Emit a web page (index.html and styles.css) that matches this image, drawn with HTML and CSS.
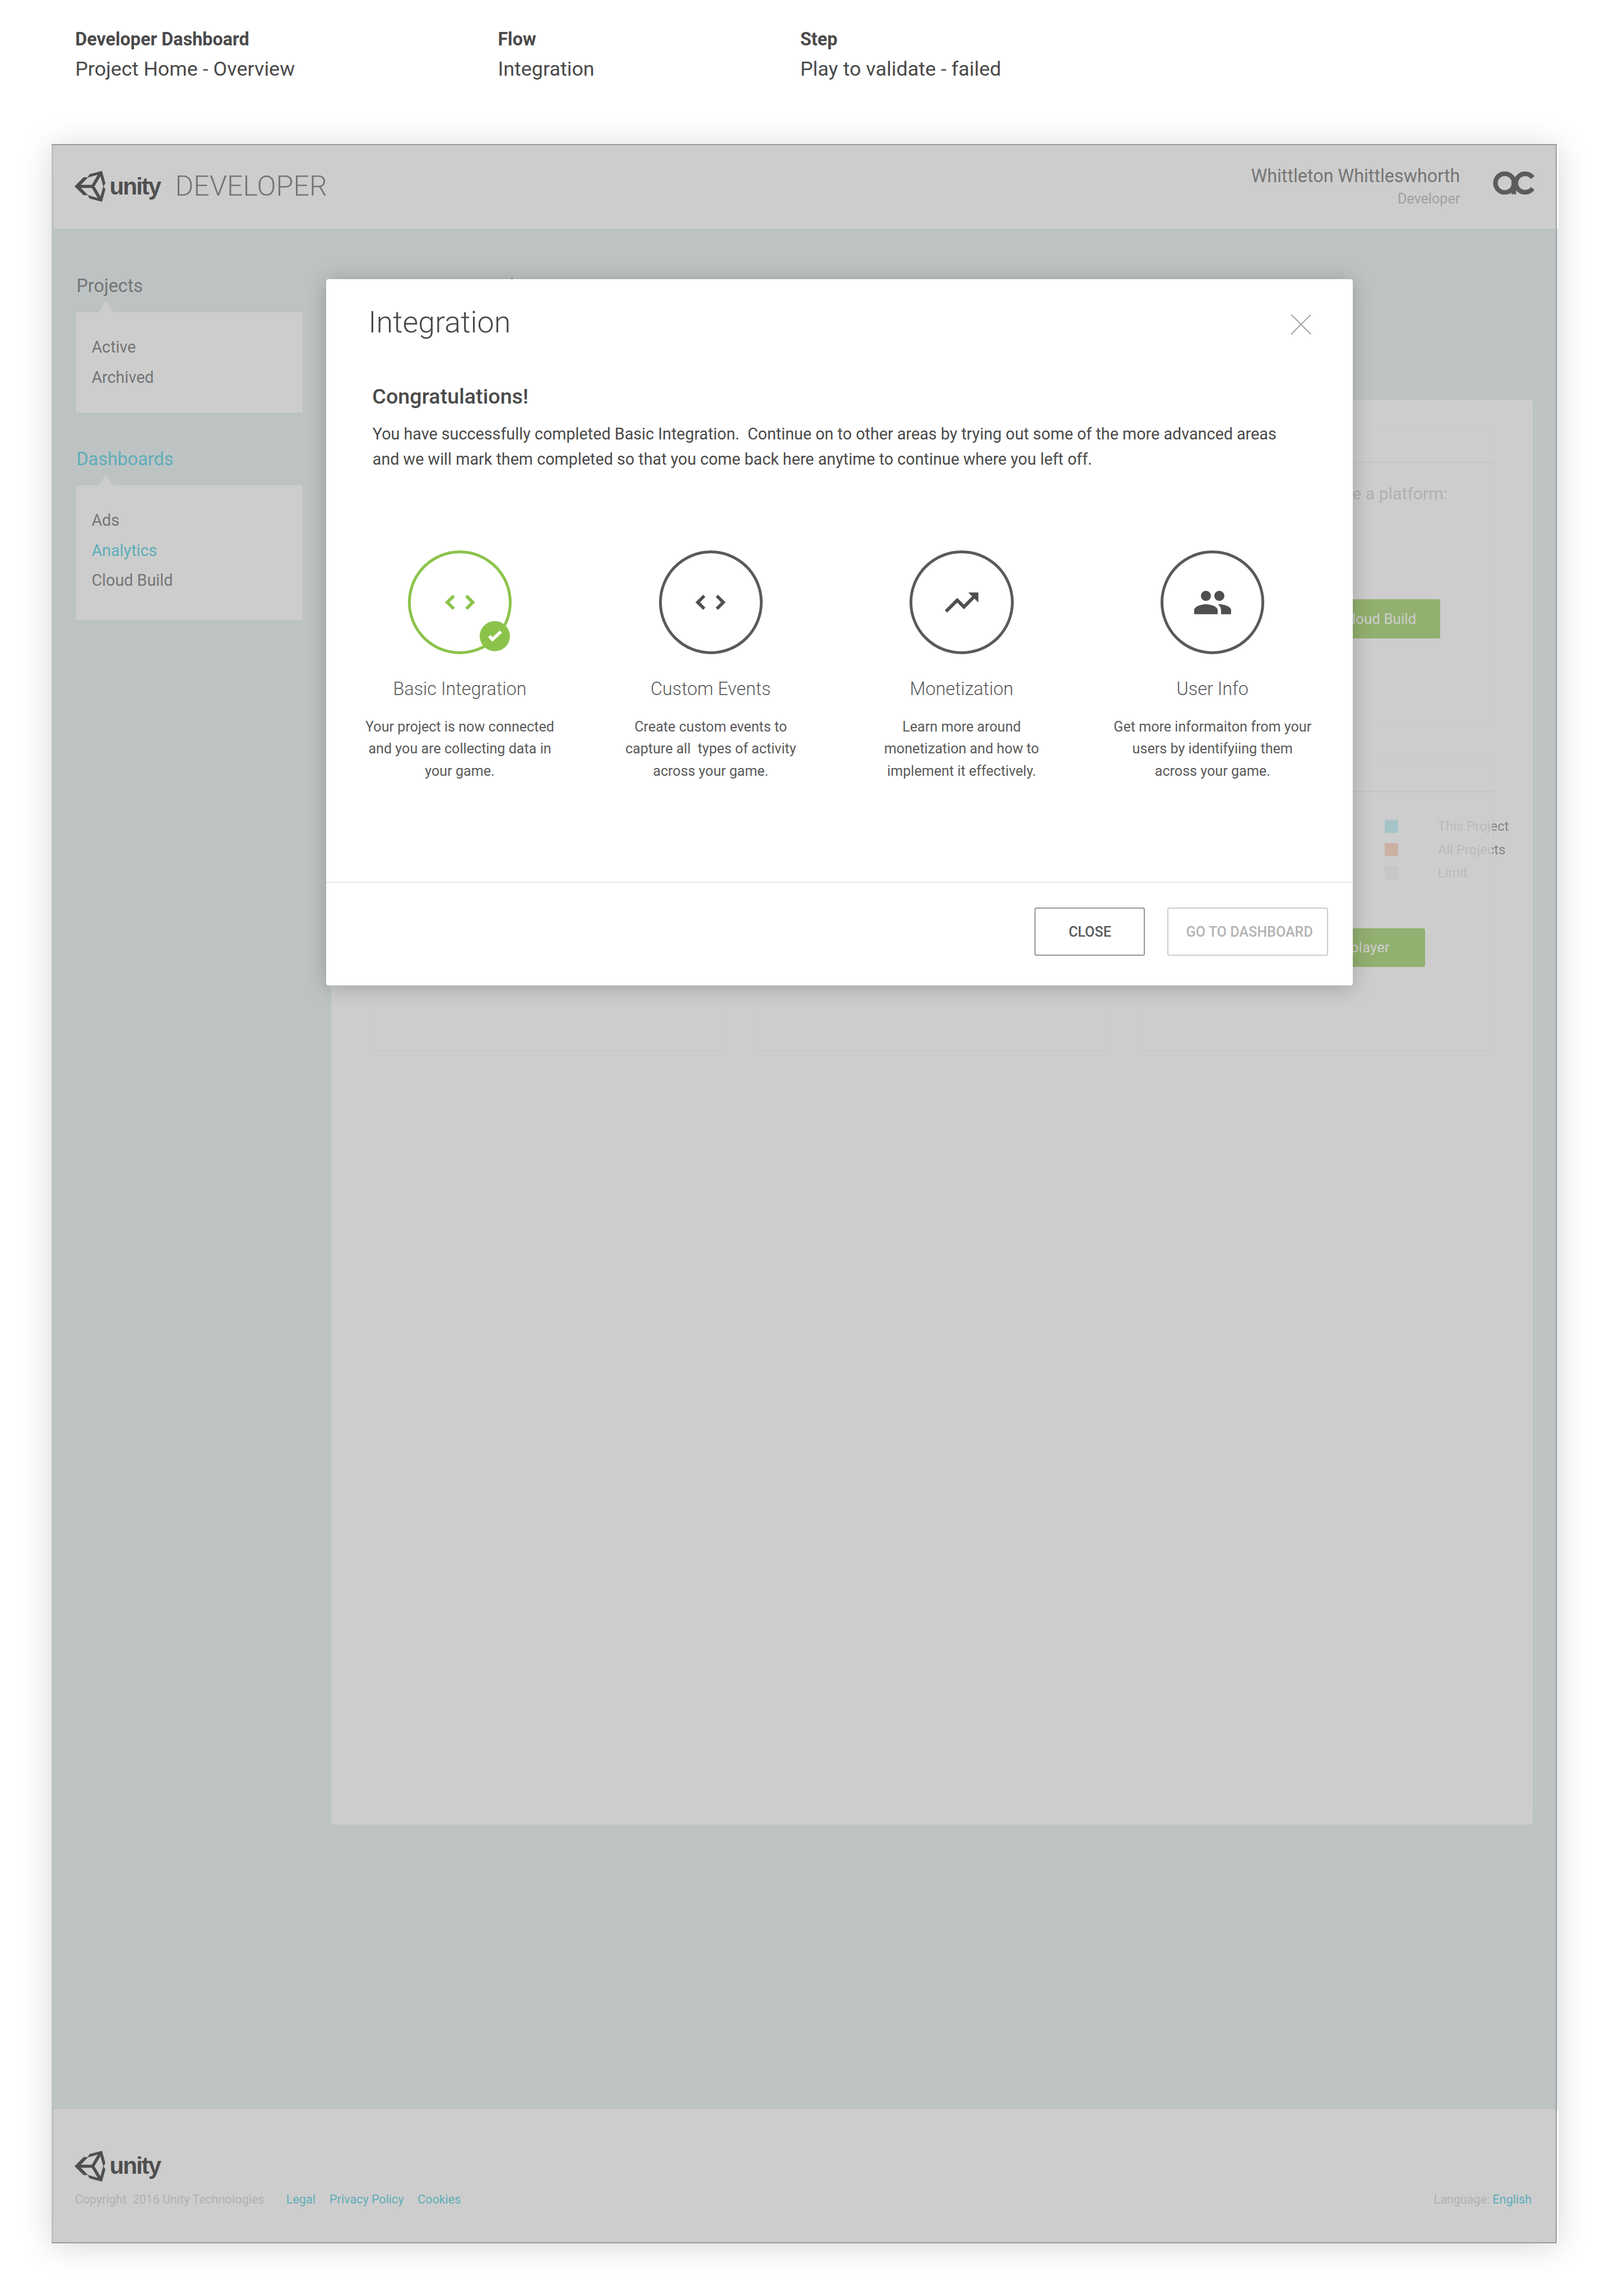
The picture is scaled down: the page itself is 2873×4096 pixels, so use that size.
FILE: index.html
```
<!DOCTYPE html>
<html lang="en">
<head>
<meta charset="utf-8">
<title>Developer Dashboard</title>
<link rel="stylesheet" href="styles.css">
</head>
<body>
<svg class="defs" aria-hidden="true">
  <symbol id="unity-mark" viewBox="24 29 184 184">
    <path fill-rule="evenodd" d="M24 121 78 67H103L113 48 188 29 208 103 197 121 208 139 188 213 113 193 103 174H78ZM62 111.500H127L162.500 51.500 104 68.500ZM62 130H127L162.500 190 104 173ZM143 121 178.500 181 195.500 121 178.500 61Z"/>
  </symbol>
</svg>

<header class="annotations">
  <div><h2>Developer Dashboard</h2><p>Project Home - Overview</p></div>
  <div><h2>Flow</h2><p>Integration</p></div>
  <div><h2>Step</h2><p>Play to validate - failed</p></div>
</header>

<div class="frame">
  <div class="screen">
    <header class="topbar">
      <div class="logo">
        <svg class="mark"><use href="#unity-mark"/></svg>
        <span class="wordmark">unity</span>
      </div>
      <span class="product">DEVELOPER</span>
      <div class="user">
        <p class="user-name">Whittleton Whittleswhorth</p>
        <p class="user-role">Developer</p>
      </div>
      <svg class="avatar" viewBox="0 0 83 46">
        <g fill="none" stroke="#5c5c5c" stroke-width="9.200">
          <circle cx="23.700" cy="22.900" r="18.600"/>
          <path d="M41.500 20V45.200"/>
          <path d="M79.100 12.200A18.400 18.400 0 1 0 79.100 33.600"/>
        </g>
      </svg>
    </header>

    <div class="content">
      <nav class="sidebar">
        <h3>Projects</h3>
        <ul><li>Active</li><li>Archived</li></ul>
        <h3 class="current">Dashboards</h3>
        <ul class="long"><li>Ads</li><li class="current">Analytics</li><li>Cloud Build</li></ul>
      </nav>
      <main class="panel">
        <div class="cards">
          <section class="card"></section>
          <section class="card"></section>
          <section class="card">
            <div class="card-head"></div>
            <p class="hint">Choose a platform:</p>
            <a class="btn btn-build">Cloud Build</a>
          </section>
          <section class="card"></section>
          <section class="card"></section>
          <section class="card">
            <div class="card-head"></div>
            <ul class="legend">
              <li><i class="swatch this"></i><span>This Project</span></li>
              <li><i class="swatch all"></i><span>All Projects</span></li>
              <li><i class="swatch limit"></i><span>Limit</span></li>
            </ul>
            <a class="btn btn-player">player</a>
          </section>
        </div>
      </main>
    </div>

    <footer class="footer">
      <div class="logo">
        <svg class="mark"><use href="#unity-mark"/></svg>
        <span class="wordmark">unity</span>
      </div>
      <div class="footer-row">
        <span class="copyright">Copyright&nbsp; 2016 Unity Technologies</span>
        <a class="legal">Legal</a><a class="privacy">Privacy Policy</a><a>Cookies</a>
        <span class="language">Language: <a>English</a></span>
      </div>
    </footer>

    <div class="modal">
      <div class="modal-head">
        <h1>Integration</h1>
        <svg class="close" viewBox="0 0 42 40"><path d="M1.500.500 40.500 39.500M40 .500 1 39.500" fill="none" stroke="#999" stroke-width="2"/></svg>
      </div>
      <h2 class="modal-title">Congratulations!</h2>
      <p class="modal-text">You have successfully completed Basic Integration.&nbsp; Continue on to other areas by trying out some of the more advanced areas<br>and we will mark them completed so that you come back here anytime to continue where you left off.</p>
      <div class="steps">
        <div class="step done">
          <div class="ring">
            <svg class="code" viewBox="0 0 60 30"><path d="M15.300 0 0 15 15.300 30 19.700 25.500 9.200 15 19.700 4.500ZM44.700 0 60 15 44.700 30 40.300 25.500 50.800 15 40.300 4.500Z"/></svg>
            <svg class="badge" viewBox="0 0 60 60"><circle cx="30" cy="30" r="30" fill="#8bc34a"/><path fill="#fff" d="M16.700 32 21.200 27.500 25.500 32 40 18.700 44.300 23 25.300 41.300Z"/></svg>
          </div>
          <h4>Basic Integration</h4>
          <p>Your project is now connected<br>and you are collecting data in<br>your game.</p>
        </div>
        <div class="step">
          <div class="ring">
            <svg class="code" viewBox="0 0 60 30"><path d="M15.300 0 0 15 15.300 30 19.700 25.500 9.200 15 19.700 4.500ZM44.700 0 60 15 44.700 30 40.300 25.500 50.800 15 40.300 4.500Z"/></svg>
          </div>
          <h4>Custom Events</h4>
          <p>Create custom events to<br>capture all&nbsp; types of activity<br>across your game.</p>
        </div>
        <div class="step">
          <div class="ring">
            <svg class="glyph" viewBox="0 0 24 24"><path d="M16 6l2.290 2.290-4.880 4.880-4-4L2 16.590 3.410 18l6-6 4 4 6.300-6.290L22 12V6z"/></svg>
          </div>
          <h4>Monetization</h4>
          <p>Learn more around<br>monetization and how to<br>implement it effectively.</p>
        </div>
        <div class="step">
          <div class="ring">
            <svg class="glyph" viewBox="0 0 24 24"><path d="M16 11c1.660 0 2.990-1.340 2.990-3S17.660 5 16 5s-3 1.340-3 3 1.340 3 3 3zm-8 0c1.660 0 2.990-1.340 2.990-3S9.660 5 8 5 5 6.340 5 8s1.340 3 3 3zm0 2c-2.330 0-7 1.170-7 3.500V19h14v-2.500c0-2.330-4.670-3.500-7-3.500zm8 0c-.290 0-.620.020-.970.050 1.160.840 1.970 1.970 1.970 3.450V19h6v-2.500c0-2.330-4.670-3.500-7-3.500z"/></svg>
          </div>
          <h4>User Info</h4>
          <p>Get more informaiton from your<br>users by identifyiing them<br>across your game.</p>
        </div>
      </div>
      <div class="modal-foot">
        <button class="action">CLOSE</button>
        <button class="action muted">GO TO DASHBOARD</button>
      </div>
    </div>
  </div>
</div>
</body>
</html>
```
FILE: styles.css
```
/* 1rem is 1/320 of the window width */
html { font-size: calc(100vw / 320); }
* { box-sizing: border-box; margin: 0; padding: 0; }
body {
  height: 100vh;
  overflow: hidden;
  background: #fff;
  color: #4a4a4a;
  font-family: Roboto, "Liberation Sans", sans-serif;
  font-size: 3.2rem;
}
ul { list-style: none; }
svg { display: block; flex: none; }
.defs { position: absolute; width: 0; height: 0; }

.annotations {
  display: grid;
  grid-template-columns: 84rem 60.1rem 60rem;
  height: 28.6rem;
  padding: 5.4rem 0 0 14.95rem;
}
.annotations h2 { font-size: 3.6rem; line-height: 5rem; font-weight: 700; }
.annotations p { font-size: 4rem; line-height: 6.72rem; }

.frame {
  width: 299.5rem;
  height: 417.2rem;
  margin-left: 10.2rem;
  background: linear-gradient(#dfe8ea .2rem, #fff .2rem 16.8rem, #dfe8ea 16.8rem 390.6rem, #fff 390.6rem);
  box-shadow: 0 .6rem 6rem rgba(0, 0, 0, .16);
}
.screen {
  position: relative;
  display: flex;
  flex-direction: column;
  width: 299.2rem;
  height: 100%;
  border: solid #999;
  border-width: 2px 2px 2px 0;
  background: #bdc3c3;
}

.topbar {
  display: flex;
  align-items: flex-start;
  height: 16.6rem;
  margin-left: .4rem;
  padding: 0 4.2rem;
  background: #cdcdcd;
}
.logo { display: flex; color: #4f4f4f; }
.mark { width: 6.13rem; height: 6.13rem; fill: #4f4f4f; }
.wordmark {
  margin: .02rem 0 0 .86rem;
  font: 700 4.7rem/6rem "Liberation Sans", Arial, sans-serif;
  letter-spacing: -.235rem;
}
.topbar .logo { width: 20rem; margin-top: 5.2rem; }
.product { margin-top: 5.18rem; color: #757575; font-size: 5.6rem; line-height: 6rem; font-weight: 300; }
.user { margin: 4.2rem 6.5rem 0 auto; text-align: right; }
.user-name { color: #757575; font-size: 3.6rem; line-height: 4.2rem; }
.user-role { color: #a0a0a0; font-size: 2.8rem; line-height: 4.7rem; }
.avatar { width: 8.3rem; height: 4.6rem; margin-top: 5.24rem; }

.content { display: flex; align-items: flex-start; height: 373.8rem; padding-left: 5rem; }
.sidebar { width: 45rem; padding-top: 9.17rem; color: #757575; }
.sidebar h3 { font-size: 3.6rem; line-height: 4.6rem; font-weight: 400; }
.sidebar ul {
  position: relative;
  height: 20rem;
  margin: 2.83rem 0 6.97rem;
  padding: 4.01rem 3rem 0;
  background: #cdcdcd;
}
.sidebar ul::before {
  content: "";
  position: absolute;
  left: 4.45rem;
  top: -2.2rem;
  border: solid transparent;
  border-width: 0 1.53rem 2.25rem;
  border-bottom-color: #cdcdcd;
}
.sidebar .long { height: 26.8rem; }
.sidebar li { line-height: 6rem; }
.sidebar .current { color: #5eaeb8; }

.panel {
  width: 238.8rem;
  height: 283.1rem;
  margin: 34rem 0 0 5.6rem;
  padding: 1.8rem .5rem 0 0;
  background: #cdcdcd;
}
.cards {
  display: grid;
  grid-template-columns: repeat(3, 69.7rem);
  grid-auto-rows: 57.7rem;
  gap: 7.7rem 7rem;
  height: 278rem;
  padding: 4.4rem 0 0 7.8rem;
  border-right: 2px solid #c9c9c9;
}
.card {
  display: flex;
  flex-direction: column;
  align-items: flex-end;
  box-shadow: 0 0 0 1px rgba(0, 0, 0, .01), 0 .2rem .3rem rgba(0, 0, 0, .03);
}
.card-head { width: 100%; height: 6.4rem; border-bottom: 2px solid #c4c4c4; }
.hint { margin: 4.05rem 9rem 0 0; color: #b1b1b1; font-size: 3.36rem; line-height: 4rem; }
.btn { border-radius: .4rem; background: #92b06f; color: #cdcdcd; white-space: nowrap; }
.btn-build { margin: 19.05rem 10.4rem 0 0; padding: 0 4.8rem; font-size: 2.9rem; line-height: 7.8rem; }
.btn-player { margin: 8.7rem 13.5rem 0 0; padding: 0 7rem; font-size: 2.9rem; line-height: 7.7rem; }
.legend { align-self: stretch; margin: 4.5rem 0 0 48.2rem; }
.legend li { display: flex; align-items: center; height: 4.6rem; white-space: nowrap; font-size: 2.66rem; }
.legend span { background: linear-gradient(90deg, #b9b9b9 10.8rem, #808080 10.8rem); background-clip: text; color: transparent; }
.swatch { flex: none; width: 2.7rem; height: 2.6rem; margin-right: 7.9rem; border-radius: .3rem; }
.swatch.this { background: #a5c3c8; }
.swatch.all { background: #ccb0a4; }
.swatch.limit { background: #c7c7c7; }

.footer { height: 26.4rem; margin-left: .4rem; padding: 8.2rem 4.75rem 0 4.2rem; background: #cdcdcd; }
.footer-row { display: flex; margin-top: 1.6rem; color: #b1b1b1; font-size: 2.4rem; line-height: 4rem; }
.footer a { color: #5eaeb8; }
.copyright { width: 42rem; margin-left: .1rem; }
.legal { width: 8.6rem; }
.privacy { width: 17.5rem; }
.language { margin-left: auto; }

.modal {
  position: absolute;
  left: 54.6rem;
  top: 26.6rem;
  display: flex;
  flex-direction: column;
  width: 204.1rem;
  height: 140.4rem;
  border-radius: .5rem;
  background: #fff;
  box-shadow: 0 .4rem 4rem rgba(0, 0, 0, .22);
}
/* tip of the page title that the dialog leaves uncovered */
.modal::before {
  content: "";
  position: absolute;
  left: 36.8rem;
  top: -2px;
  width: 3px;
  height: 2px;
  background: #757575;
}
.modal-head { display: flex; justify-content: space-between; padding: 5.12rem 8.2rem 0 8.4rem; }
.modal-head h1 { font-size: 6rem; line-height: 7rem; font-weight: 300; }
.close { width: 4.2rem; height: 4rem; margin-top: 1.95rem; }
.modal-title { margin: 8.81rem 0 0 9.2rem; font-size: 4.2rem; line-height: 5rem; font-weight: 500; }
.modal-text { margin: 2.38rem 0 0 9.25rem; line-height: 5rem; white-space: nowrap; }
.steps { display: grid; grid-template-columns: repeat(4, 49.87rem); margin: 15.63rem 0 0 1.66rem; text-align: center; color: #5a5a5a; fill: #4f4f4f; }
.ring {
  position: relative;
  display: flex;
  align-items: center;
  justify-content: center;
  width: 20.65rem;
  height: 20.65rem;
  margin: 0 auto;
  border: .6rem solid #5a5a5a;
  border-radius: 50%;
}
.done .ring { border-color: #8bc34a; fill: #8bc34a; }
.code { width: 6rem; height: 3rem; }
.glyph { width: 8rem; height: 8rem; }
.badge { position: absolute; left: 13.75rem; top: 13.5rem; width: 6rem; height: 6rem; }
.step h4 { margin-top: 4.62rem; font-size: 3.6rem; line-height: 4.6rem; font-weight: 300; }
.step p { margin-top: 2.97rem; font-size: 2.8rem; line-height: 4.4rem; }
.modal-foot {
  display: flex;
  justify-content: flex-end;
  gap: 4.45rem;
  height: 20.65rem;
  margin-top: auto;
  padding: 4.9rem 4.95rem 0 0;
  border-top: 2px solid #e6e6e6;
}
.action {
  width: 21.95rem;
  height: 9.65rem;
  padding-top: .15rem;
  border: 2px solid #969696;
  border-radius: .4rem;
  background: #fff;
  color: #5a5a5a;
  font: 500 2.8rem/9.2rem Roboto, sans-serif;
}
.action.muted { width: 31.9rem; padding-left: .7rem; border-color: #ccc; color: #b3b3b3; }
```
